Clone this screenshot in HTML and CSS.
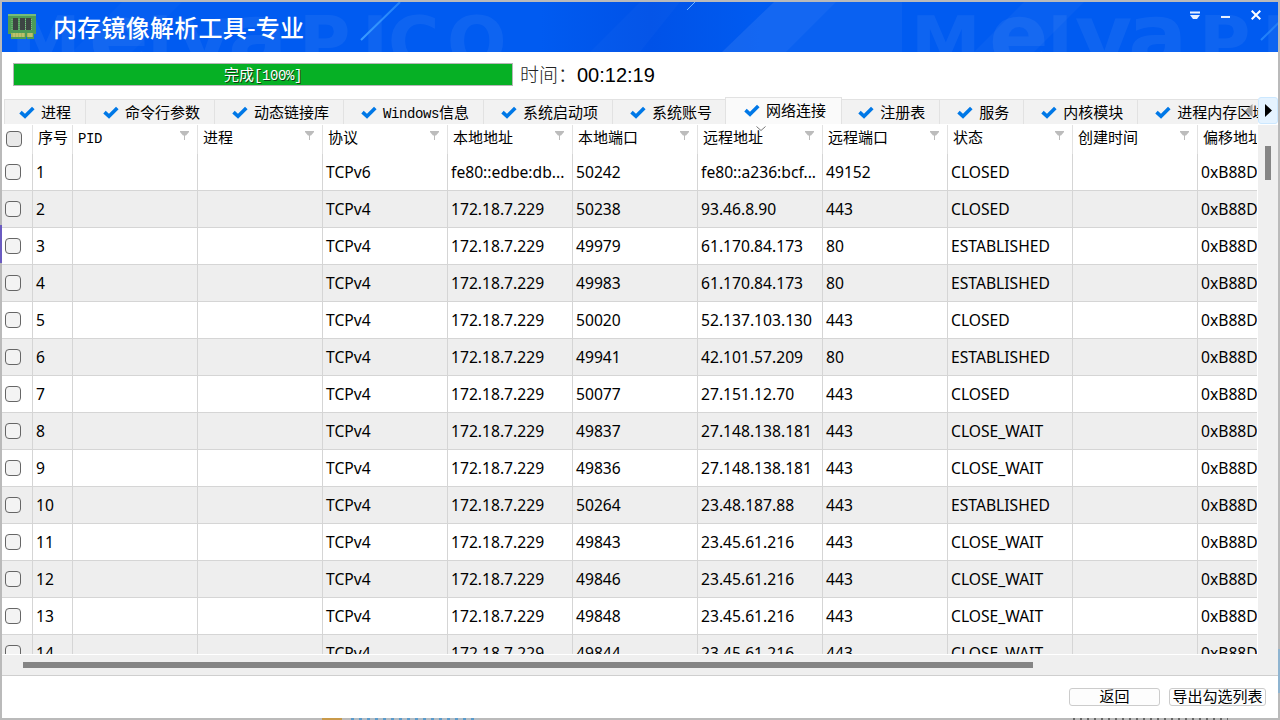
FILE: index.html
```html
<!DOCTYPE html>
<html lang="zh-CN">
<head>
    <meta charset="UTF-8">
    <meta name="viewport" content="width=device-width, initial-scale=1.0">
    <title>内存镜像解析工具-专业</title>
    <link rel="stylesheet" href="styles.css">
</head>
<body>
    <div class="window">
        <header class="titlebar">
            <svg class="pattern" width="1276" height="50" viewBox="2 2 1276 50" aria-hidden="true">
                <defs>
                    <linearGradient id="deep" x1="0" x2="1">
                        <stop offset="0" stop-color="#0052e6" stop-opacity="0"/>
                        <stop offset=".5" stop-color="#0052e8"/>
                        <stop offset="1" stop-color="#0052e6" stop-opacity="0"/>
                    </linearGradient>
                    <linearGradient id="streak" x1="0" y1="1" x2="1" y2="0">
                        <stop offset="0" stop-color="#3a9cff"/>
                        <stop offset="1" stop-color="#3a9cff" stop-opacity=".2"/>
                    </linearGradient>
                </defs>
                <rect x="540" y="2" width="220" height="50" fill="url(#deep)"/>
                <polygon points="722,52 774,2 836,2 786,52" fill="#fff" opacity=".08"/>
                <polygon points="786,52 836,2 902,2 902,52" fill="#fff" opacity=".04"/>
                <polygon points="590,52 640,2 680,2 640,52" fill="#fff" opacity=".02"/>
                <polygon points="72,52 122,2 182,2 132,52" fill="#fff" opacity=".02"/>
                <polygon points="974,52 1024,2 1084,2 1034,52" fill="#fff" opacity=".03"/>
                <g id="brand" class="brand">
                    <text y="66"><tspan class="cap" x="11">M</tspan><tspan x="89">e</tspan><tspan class="cap" x="147">I</tspan><tspan x="175">y</tspan><tspan x="228">a</tspan><tspan class="cap" x="299 362 388 447">PICO</tspan></text>
                </g>
                <use href="#brand" x="900"/>
                <path d="M361 40L400 2M1261 40L1300 2" stroke="url(#streak)" stroke-width="2"/>
                <path d="M687 10L695 2" stroke="#6cb2ff"/>
            </svg>
            <svg class="logo" width="28" height="28" viewBox="0 0 28 28">
                <path d="M0 1h28v20h-2v5h-7v-2h-1v2H3v-5H0z" fill="#4d9c57"/>
                <path d="M0 1h28v2H0z" fill="#77bb78"/>
                <path d="M3 20h14v4H3zm16 0h6v4h-6z" fill="#a8b45c"/>
                <path d="M6 20v4m3-4v4m3-4v4m3-4v4m6-4v4m2-4v4" stroke="#cfcc7c"/>
                <path d="M5 5h5v12H5zm7 0h5v12h-5zm6 0h5v12h-5z" fill="#3d4543"/>
                <path d="M4 6v11m7-11v11m6.500-11v11m6-11v11" stroke="#86b58a" stroke-dasharray="1 1"/>
            </svg>
            <h1>内存镜像解析工具-专业</h1>
            <div class="controls">
                <svg width="10" height="9" viewBox="0 0 10 9"><path d="M0 .5h10v2H0zM0 4h10L7 8H3z" fill="#e6efff"/></svg>
                <svg width="9" height="9" viewBox="0 0 9 9"><path d="M0 5h9v2H0z" fill="#e6efff"/></svg>
                <svg width="10" height="10" viewBox="0 0 10 10"><path d="M.7.7l8.600 8.600M9.300.7L.7 9.300" stroke="#fff" stroke-width="2"/></svg>
            </div>
        </header>

        <div class="status">
            <div class="progress">完成<span class="latin">[100%]</span></div>
            <div class="time"><span>时间：</span>00:12:19</div>
        </div>

        <div class="tabbar">
            <nav class="tabs" id="tabs"></nav>
            <svg class="tab-prev" width="8" height="13" viewBox="0 0 8 13"><path d="M7.500 0v13L0 6.500z" fill="#a0a0a0"/></svg>
            <button class="tab-next"><svg width="7" height="13" viewBox="0 0 7 13"><path d="M0 0v13l7-6.500z" fill="#000"/></svg></button>
        </div>

        <div class="content">
            <div class="table-container">
                <table>
                    <colgroup id="cols"></colgroup>
                    <thead><tr id="head"></tr></thead>
                    <tbody id="rows"></tbody>
                </table>
            </div>
            <div class="vscroll"><div class="thumb"></div></div>
        </div>
        <div class="hscroll"><div class="thumb"></div></div>

        <footer class="buttons">
            <button class="back">返回</button>
            <button class="export">导出勾选列表</button>
        </footer>
    </div>

    <script>
        const tabs = ['进程', '命令行参数', '动态链接库', '<span class="latin">Windows</span>信息', '系统启动项', '系统账号',
            '网络连接', '注册表', '服务', '内核模块', '进程内存区域'];
        const columns = ['<span class="latin">PID</span>', '进程', '协议', '本地地址', '本地端口', '远程地址', '远程端口', '状态', '创建时间', '偏移地址'];
        const local = '172.18.7.229';
        const conexiones = [
            ['TCPv6', 'fe80::edbe:db...', '50242', 'fe80::a236:bcf...', '49152', 'CLOSED'],
            ['TCPv4', local, '50238', '93.46.8.90', '443', 'CLOSED'],
            ['TCPv4', local, '49979', '61.170.84.173', '80', 'ESTABLISHED'],
            ['TCPv4', local, '49983', '61.170.84.173', '80', 'ESTABLISHED'],
            ['TCPv4', local, '50020', '52.137.103.130', '443', 'CLOSED'],
            ['TCPv4', local, '49941', '42.101.57.209', '80', 'ESTABLISHED'],
            ['TCPv4', local, '50077', '27.151.12.70', '443', 'CLOSED'],
            ['TCPv4', local, '49837', '27.148.138.181', '443', 'CLOSE_WAIT'],
            ['TCPv4', local, '49836', '27.148.138.181', '443', 'CLOSE_WAIT'],
            ['TCPv4', local, '50264', '23.48.187.88', '443', 'ESTABLISHED'],
            ['TCPv4', local, '49843', '23.45.61.216', '443', 'CLOSE_WAIT'],
            ['TCPv4', local, '49846', '23.45.61.216', '443', 'CLOSE_WAIT'],
            ['TCPv4', local, '49848', '23.45.61.216', '443', 'CLOSE_WAIT'],
            ['TCPv4', local, '49844', '23.45.61.216', '443', 'CLOSE_WAIT']
        ];

        const check = '<svg width="16" height="13" viewBox="0 0 16 13"><path d="M1.500 6.200L6 10.300 14.300 2" fill="none" stroke="#0078e7" stroke-width="3.600"/></svg>';
        const funnel = '<svg class="funnel" width="9" height="10" viewBox="0 0 9 10"><path d="M0 0h9v1L6 4.500H5V9H4V4.500H3L0 1z" fill="#bcbcbc"/></svg>';
        const sort = '<svg class="sort" width="10" height="5" viewBox="0 0 10 5"><path d="M.5.5l4.500 4 4.500-4" fill="none" stroke="#777"/></svg>';

        document.getElementById('tabs').innerHTML = tabs.map(t =>
            `<div class="tab${t === '网络连接' ? ' active' : ''}">${check}<span>${t}</span></div>`).join('');

        document.getElementById('cols').innerHTML = '<col class="col-check"><col class="col-num">' + columns.map(() => '<col class="col-data">').join('');

        document.getElementById('head').innerHTML = '<th><span class="checkbox"></span></th><th>序号</th>' +
            columns.map(c => `<th>${c}${funnel}${c === '远程地址' ? sort : ''}</th>`).join('');

        document.getElementById('rows').innerHTML = conexiones.map((c, i) => `
            <tr>
                <td><span class="checkbox"></span></td>
                <td>${i + 1}</td>
                <td></td>
                <td></td>
                ${c.map(v => `<td>${v}</td>`).join('')}
                <td></td>
                <td>0xB88D</td>
            </tr>
        `).join('');
    </script>
</body>
</html>
```
FILE: styles.css
```css
* {
    box-sizing: border-box;
}
body {
    margin: 0;
    padding: 2px;
    height: 720px;
    overflow: hidden;
    font-family: "Noto Sans CJK SC", sans-serif;
    font-size: 15px;
    color: #000;
    background:
        linear-gradient(#6a5bc0, #6a5bc0) 0 225px / 2px 38px no-repeat,
        linear-gradient(#8fb4d0, #8fb4d0) 1278px 649px / 2px 44px no-repeat,
        linear-gradient(#c99a4a, #c99a4a) 322px 718px / 20px 2px no-repeat,
        repeating-linear-gradient(90deg, #5b9bcb 0 3px, #b4bcc2 3px 8px) 351px 718px / 128px 2px no-repeat,
        repeating-linear-gradient(90deg, #666 0 2px, #b9b9b9 2px 7px) 1073px 718px / 155px 2px no-repeat,
        #bababa;
}
.window {
    width: 1276px;
    height: 716px;
    display: flex;
    flex-direction: column;
    background-color: white;
}
button {
    font: inherit;
    color: inherit;
    padding: 0;
}
.latin {
    font-family: "Liberation Mono", monospace;
    font-size: 14px;
    line-height: 1;
    letter-spacing: -0.4px;
}

/* Barra de título */
.titlebar {
    position: relative;
    flex: none;
    height: 50px;
    display: flex;
    align-items: center;
    padding: 0 17px 0 6px;
    background-color: #005bf1;
    overflow: hidden;
}
.pattern {
    position: absolute;
    top: 0;
    left: 0;
}
.brand {
    fill: #fff;
    opacity: 0.055;
    font-family: "DejaVu Sans", sans-serif;
    font-weight: bold;
    font-size: 88px;
}
.brand .cap {
    font-size: 70px;
}
.logo {
    position: relative;
}
.titlebar h1 {
    position: relative;
    margin: 0 auto 0 17px;
    color: white;
    font-size: 24px;
    font-weight: 500;
    line-height: 50px;
    letter-spacing: 0.25px;
}
.controls {
    position: relative;
    align-self: flex-start;
    display: flex;
    align-items: center;
    gap: 21px;
    margin-top: 8px;
}

/* Progreso */
.status {
    flex: none;
    height: 45px;
    display: flex;
    padding: 11px 11px 0;
}
.progress {
    width: 500px;
    height: 23px;
    border: 1px solid #b6b6b6;
    background-color: #06b025;
    color: white;
    text-align: center;
    line-height: 20px;
    text-shadow: 1px 1px 0 #123d18;
}
.time {
    display: flex;
    margin-left: 7px;
    font-family: "Liberation Sans", "Noto Sans CJK SC", sans-serif;
    font-size: 20px;
    line-height: 24px;
}
.time span {
    width: 57px;
    font-size: 19px;
    font-weight: 300;
    line-height: 26px;
    color: #222;
}

/* Pestañas */
.tabbar {
    position: relative;
    flex: none;
    height: 27px;
    display: flex;
}
.tabs {
    width: 1256px;
    display: flex;
    align-items: flex-end;
    overflow: hidden;
}
.tab {
    flex: none;
    height: 25px;
    display: flex;
    align-items: center;
    gap: 6px;
    padding: 0 14px 0 17px;
    border: 1px solid #e2e2e2;
    border-width: 1px 0 0 1px;
    background-color: #f2f2f2;
    line-height: 22px;
    white-space: nowrap;
}
.tab:first-child {
    margin-left: 2px;
    padding-left: 14px;
}
.tab.active {
    position: relative;
    height: 27px;
    margin: 0 -2px 0 -1px;
    padding: 0 15px 2px 18px;
    border-right-width: 1px;
    background-color: #fafafa;
}
.tab-prev {
    position: absolute;
    top: 7px;
    left: 1243px;
}
.tab-next {
    width: 20px;
    height: 27px;
    display: flex;
    align-items: center;
    justify-content: center;
    border: 1px solid #cce8ff;
    border-radius: 3px;
    background-color: #e5f3ff;
}

/* Tabla */
.content {
    flex: none;
    height: 530px;
    display: flex;
    margin-top: 1px;
}
.table-container {
    width: 1255px;
    height: 529px;
    overflow: hidden;
}
table {
    width: 1321px;
    table-layout: fixed;
    border-collapse: separate;
    border-spacing: 0;
}
.col-check {
    width: 31px;
}
.col-num {
    width: 40px;
}
.col-data {
    width: 125px;
}
th, td {
    padding: 0 0 0 3px;
    text-align: left;
    white-space: nowrap;
    border-right: 1px solid #d5d5d5;
}
th {
    position: relative;
    height: 29px;
    padding: 0 0 5px 5px;
    font-weight: normal;
    line-height: 22px;
    border-color: #e2e2e2;
}
td {
    height: 37px;
    border-bottom: 1px solid #d5d5d5;
    font-family: "Noto Sans", sans-serif;
    font-size: 15.65px;
    line-height: 22px;
}
tbody tr:nth-child(even) {
    background-color: #eee;
}
.checkbox {
    display: block;
    width: 16px;
    height: 16px;
    border: 1px solid #666;
    border-radius: 4px;
    background-color: #f3f3f3;
}
th .checkbox {
    margin: 4px 0 0 -1px;
    background-color: #e9e9e9;
}
.funnel {
    position: absolute;
    top: 6px;
    right: 8px;
}
.sort {
    position: absolute;
    top: 1px;
    left: 58px;
}

/* Barras de desplazamiento */
.vscroll {
    width: 21px;
    padding: 21px 0 0 7px;
    border-left: 1px solid white;
    background-color: #efefef;
}
.vscroll .thumb {
    width: 6px;
    height: 34px;
    background-color: #858585;
}
.hscroll {
    flex: none;
    height: 21px;
    padding: 7px 0 0 21px;
    border-bottom: 1px solid #cfcfcf;
    background-color: #efefef;
}
.hscroll .thumb {
    width: 1010px;
    height: 6px;
    background-color: #858585;
}

.buttons {
    display: flex;
    justify-content: flex-end;
    gap: 9px;
    padding: 12px 12px 0 0;
}
.buttons button {
    height: 18px;
    padding-bottom: 2px;
    border: 1px solid #ccc;
    border-radius: 3px;
    background-color: #fdfdfd;
    line-height: 14px;
    white-space: nowrap;
}
.back {
    width: 91px;
}
.export {
    width: 97px;
}
```
